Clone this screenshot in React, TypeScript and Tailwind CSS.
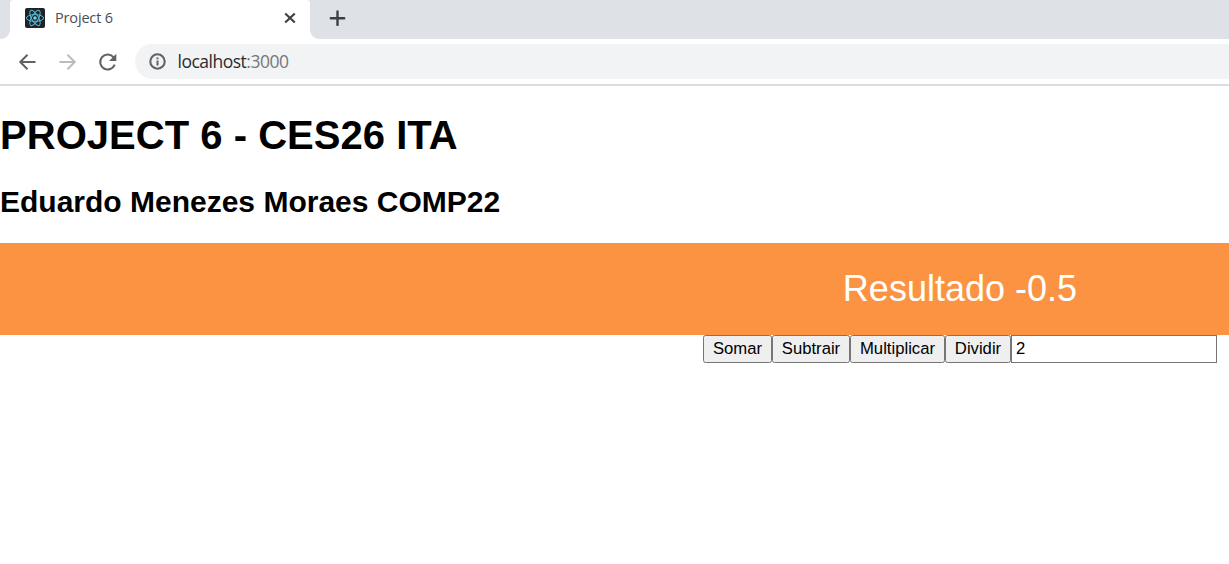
import type { ReactNode } from "react";

function ReactLogo() {
  return (
    <svg width="20" height="20" viewBox="0 0 20 20" className="shrink-0">
      <rect width="20" height="20" rx="2" fill="#202226" />
      <g fill="none" stroke="#53bcd8" strokeWidth="1">
        <ellipse cx="10" cy="10" rx="8.6" ry="3.4" />
        <ellipse cx="10" cy="10" rx="8.6" ry="3.4" transform="rotate(60 10 10)" />
        <ellipse cx="10" cy="10" rx="8.6" ry="3.4" transform="rotate(120 10 10)" />
      </g>
      <circle cx="10" cy="10" r="1.7" fill="#61dafb" />
    </svg>
  );
}

function TabStrip() {
  return (
    <div className="flex h-[39px] w-full">
      <div className="h-full w-[10px] rounded-br-[9px] bg-[#dee1e6]" />
      <div className="h-full w-[300px] bg-[#dee1e6]">
        <div className="flex h-full items-start rounded-t-[3px] bg-white pl-[15px] pt-2">
          <ReactLogo />
          <span className="ml-[10px] w-[225px] whitespace-nowrap font-['Open_Sans',sans-serif] text-[14.5px] leading-5 tracking-[-0.16px] text-[#4a4e52]">
            Project 6
          </span>
          <svg width="20" height="20" viewBox="0 0 20 20" className="shrink-0">
            <path d="M5.2 5.4 14.8 14.6M14.8 5.4 5.2 14.6" stroke="#3c4043" strokeWidth="2.1" />
          </svg>
        </div>
      </div>
      <div className="h-full flex-1 rounded-bl-[9px] bg-[#dee1e6] pl-[17px] pt-2">
        <svg width="20" height="20" viewBox="0 0 20 20">
          <path d="M10.5 3.5v13.4M3.8 10.2h13.4" stroke="#3c4043" strokeWidth="2.4" strokeLinecap="round" />
        </svg>
      </div>
    </div>
  );
}

function Toolbar() {
  return (
    <div className="flex h-[47px] items-start border-b-2 border-[#dcdde1] pt-[5px]">
      <div className="flex h-[35px] w-[135px] items-center gap-5 pl-[17px]">
        <svg width="20" height="20" viewBox="0 0 20 20" fill="none" stroke="#5f6368" strokeWidth="2">
          <path d="M18.5 10H4M10.5 2.8 3.3 10l7.2 7.2" />
        </svg>
        <svg width="20" height="20" viewBox="0 0 20 20" fill="none" stroke="#babcbe" strokeWidth="2">
          <path d="M2.5 10H17M10.5 2.8l7.2 7.2-7.2 7.2" />
        </svg>
        <svg width="20" height="20" viewBox="0 0 20 20" fill="none" stroke="#5f6368" strokeWidth="2.1">
          <path d="M17.7 12.6A7.5 7.5 0 1 1 16.2 4.9L17.4 6.2" />
          <path d="M19.3 1.8V9h-7.2Z" fill="#5f6368" stroke="none" />
        </svg>
      </div>
      <div className="flex h-[35px] flex-1 items-center rounded-l-full bg-[#f1f3f4] pl-[14px]">
        <svg width="17" height="17" viewBox="0 0 17 17" fill="none" stroke="#5f6368" className="shrink-0">
          <circle cx="8.5" cy="8.5" r="7.2" strokeWidth="2.1" />
          <path d="M8.5 7.5v5M8.5 4.4v1.9" strokeWidth="2" />
        </svg>
        <span className="ml-[11.5px] whitespace-nowrap font-['Open_Sans',sans-serif] text-[17.5px] tracking-[-0.5px] text-[#2b2c2f]">
          localhost<span className="text-[#74787c]">:3000</span>
        </span>
      </div>
    </div>
  );
}

function ActionButton({ width, children }: { width: string; children: ReactNode }) {
  return (
    <button
      type="button"
      className={`h-[28px] rounded-[2.5px] border border-[#767676] bg-[#efefef] text-center leading-[24px] ${width}`}
    >
      {children}
    </button>
  );
}

export default function App() {
  return (
    <div className="h-[564px] w-full overflow-hidden bg-white font-['Liberation_Sans',Arial,sans-serif] text-black">
      <TabStrip />
      <Toolbar />
      <main>
        <h1 className="mt-[26px] whitespace-nowrap text-[40px] font-bold leading-[46px] tracking-[0.03px]">
          PROJECT 6 - CES26 ITA
        </h1>
        <h2 className="mt-[27px] whitespace-nowrap text-[30px] font-bold leading-[34px]">
          Eduardo Menezes Moraes COMP22
        </h2>
        <div className="mt-[24px] flex h-[92px] items-center justify-end bg-[#fc9342] pr-[152px]">
          <span className="whitespace-nowrap text-[36px] leading-[42px] text-white">Resultado -0.5</span>
        </div>
        <div className="flex justify-end pr-3 text-[16.67px]">
          <ActionButton width="w-[69px]">Somar</ActionButton>
          <ActionButton width="w-[78px]">Subtrair</ActionButton>
          <ActionButton width="w-[95px]">Multiplicar</ActionButton>
          <ActionButton width="w-[66px]">Dividir</ActionButton>
          <input
            defaultValue="2"
            className="h-[28px] w-[206px] border border-[#767676] bg-white px-1 text-[16.67px] outline-none"
          />
        </div>
      </main>
    </div>
  );
}
